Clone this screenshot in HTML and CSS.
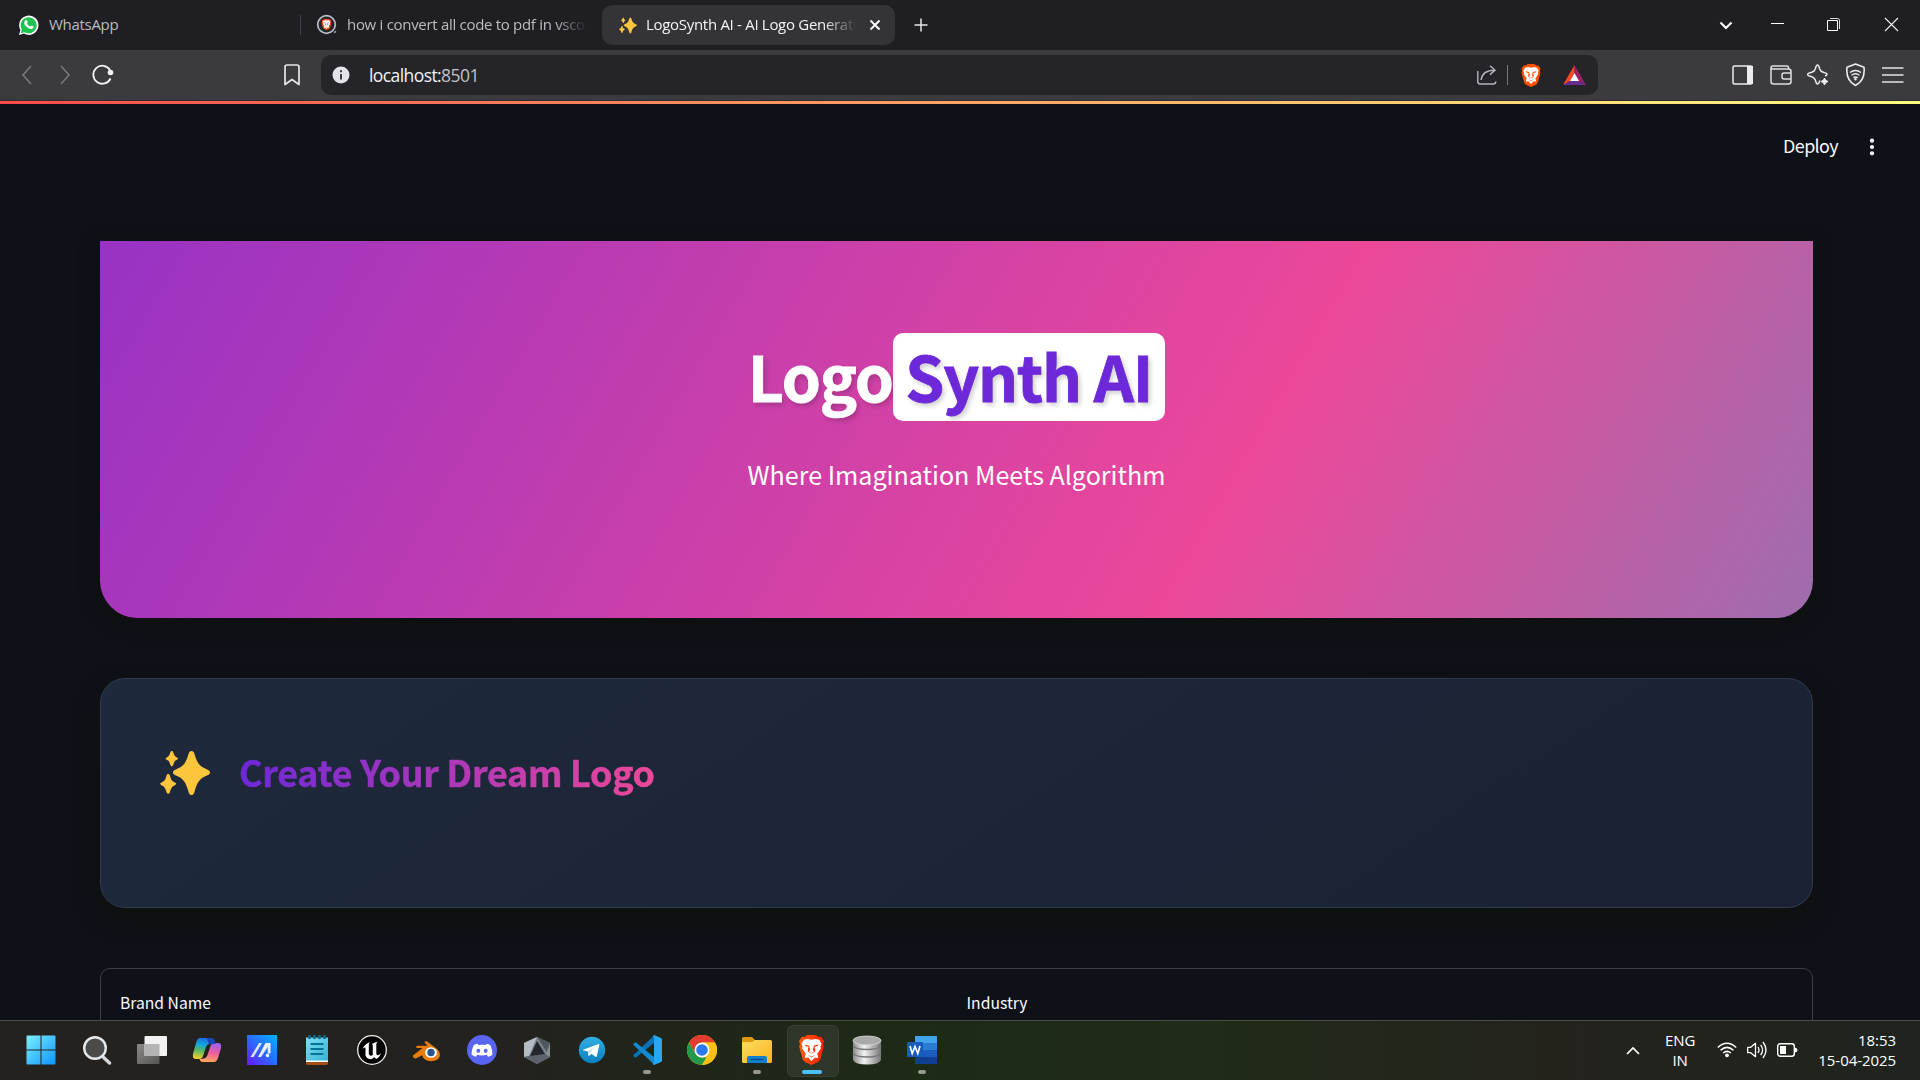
FILE: index.html
```html
<!DOCTYPE html>
<html lang="en">
<head>
<meta charset="utf-8">
<title>LogoSynth AI - AI Logo Generator</title>
<link rel="stylesheet" href="styles.css">
</head>
<body>
<svg class="defs" width="0" height="0">
  <defs>
    <linearGradient id="gWin" x1="0" y1="0" x2="1" y2="1"><stop offset="0" stop-color="#7df0ff"/><stop offset="1" stop-color="#0a93ff"/></linearGradient>
    <linearGradient id="gCopA" x1="0.5" y1="0" x2="0.3" y2="1"><stop offset="0" stop-color="#1a6be0"/><stop offset=".35" stop-color="#16a7d8"/><stop offset=".6" stop-color="#58b862"/><stop offset="1" stop-color="#f3d02b"/></linearGradient>
    <linearGradient id="gCopB" x1="0.6" y1="0" x2="0.4" y2="1"><stop offset="0" stop-color="#a05ef0"/><stop offset=".5" stop-color="#ee5f9c"/><stop offset="1" stop-color="#ffa75c"/></linearGradient>
    <linearGradient id="gMy" x1="0" y1="1" x2="1" y2="0"><stop offset="0" stop-color="#6a14ff"/><stop offset=".5" stop-color="#2a6cff"/><stop offset="1" stop-color="#00b4ff"/></linearGradient>
    <linearGradient id="gNote" x1="0" y1="0" x2="1" y2="1"><stop offset="0" stop-color="#7fe0f2"/><stop offset="1" stop-color="#35b3d4"/></linearGradient>
    <linearGradient id="gTg" x1="0" y1="0" x2="0" y2="1"><stop offset="0" stop-color="#31aee4"/><stop offset="1" stop-color="#0a80be"/></linearGradient>
    <linearGradient id="gFold" x1="0" y1="0" x2="1" y2="1"><stop offset="0" stop-color="#ffdc62"/><stop offset="1" stop-color="#f6b51e"/></linearGradient>
    <linearGradient id="gDb" x1="0" y1="0" x2="1" y2="0"><stop offset="0" stop-color="#8c8c8c"/><stop offset=".4" stop-color="#f2f2f2"/><stop offset="1" stop-color="#777"/></linearGradient>
    <linearGradient id="gBrave" x1="0" y1="0" x2="1" y2="0"><stop offset="0" stop-color="#ff5a10"/><stop offset="1" stop-color="#ff2000"/></linearGradient>
    <linearGradient id="gTask" x1="0" y1="0" x2="1" y2="1"><stop offset="0" stop-color="#8a8a88"/><stop offset="1" stop-color="#555553"/></linearGradient>
    <symbol id="sparkles" viewBox="0 0 50 46">
      <path fill="#fbc53c" d="M31.500 1c1.600 0 2.300 1.200 2.800 2.600 2.900 9.500 4.700 12.400 12.700 15.800 1.900.8 3 1.700 3 3s-1.100 2.200-3 3c-8 3.300-9.800 6.800-12.700 17-.5 1.500-1.200 2.600-2.800 2.600s-2.300-1.100-2.800-2.600c-2.900-10.200-4.700-13.700-12.700-17-1.900-.8-3-1.700-3-3s1.100-2.200 3-3c8-3.400 9.800-6.300 12.700-15.800C29.200 2.200 29.900 1 31.500 1z"/>
      <path fill="#fbc53c" d="M11.800 1c.9 0 1.200.6 1.500 1.500.9 3 1.300 3.700 3.500 4.900.9.500 1.200.7 1.200 1.200s-.3.800-1.200 1.200c-2.200 1.100-2.600 2-3.500 5-.3.900-.6 1.500-1.500 1.500s-1.200-.6-1.500-1.500c-.9-3-1.300-3.900-3.500-5-.9-.4-1.200-.7-1.200-1.200s.3-.7 1.200-1.200c2.200-1.200 2.600-1.900 3.500-4.900.3-.9.600-1.500 1.500-1.500zM8.200 24c1 0 1.400.7 1.700 1.700 1.200 4 1.700 5 4.600 6.500 1.100.6 1.700.9 1.700 1.600s-.6 1-1.700 1.600c-2.900 1.500-3.400 2.700-4.600 6.700-.3 1-.7 1.700-1.700 1.700s-1.400-.7-1.700-1.700c-1.200-4-1.700-5.200-4.600-6.700C.800 34.800.2 34.500.2 33.800s.6-1 1.700-1.600c2.900-1.500 3.400-2.500 4.600-6.500.3-1 .7-1.700 1.700-1.700z"/>
    </symbol>
    <symbol id="lion" viewBox="0 0 26 30">
      <path d="M6 2 8.500 0h9L20 2l2.500-.2L25.500 6l-1 3 .8 2.500-3.500 13-2.300 2.500L13 30l-6.500-3L4.200 24.500.700 11.500 1.500 9l-1-3 3-4.200z"/>
      <path fill="#fff" d="m9 4 4 .8L17 4l3.800.8 2.200 4-1 2.700.3 2-3.600 5.500 1 2.500-.8 1.800-2.400-.8-3.500 3.600-3.500-3.600-2.400.8-.8-1.800 1-2.500L3.700 13.500l.3-2-1-2.700 2.200-4z"/>
      <path d="m6 9.500 4.500 1 1.200 4-1.200 2.200 2.500 1.200 2.500-1.200-1.200-2.200 1.200-4 4.500-1-1 1.500-3 .8 .8 3.500-.6 1.700-3.200 1.500-3.200-1.500-.6-1.700.8-3.500-3-.8zM9.500 20l3.500 1.500 3.500-1.500-3.500 2.600z"/>
    </symbol>
  </defs>
</svg>

<div class="screen">
  <header class="tabstrip">
    <div class="tab tab-first">
      <svg width="22" height="22" viewBox="0 0 22 22"><path d="M1 21l1.400-5A9.700 9.700 0 1 1 6 19.600z" fill="#fff"/><path d="M2.800 19.200l1-3.700A8 8 0 1 1 6.500 18.200z" fill="#1fc24f"/><path d="M7.700 6.300c.5-.4 1-.3 1.300.3l.6 1.500c.2.500-.7 1.100-.6 1.400.8 1.500 1.700 2.300 3.200 2.900.4.100 1-1.100 1.400-1l1.700.9c.5.300.4 1.700-.5 2.300-1.300.9-3.200.5-5.300-1-2.600-1.900-4-4.300-3-6.200.300-.5.800-.8 1.200-1.100z" fill="#fff"/></svg>
      <span class="tab-title">WhatsApp</span>
    </div>
    <div class="tab tab-second">
      <svg width="22" height="22" viewBox="0 0 22 22"><circle cx="10.500" cy="10.500" r="8.800" fill="#26262a" stroke="#b9bbc6" stroke-width="1.700"/><path d="M18.500 17.500l1 1" stroke="#b9bbc6" stroke-width="2"/><svg x="5.500" y="4.500" width="10" height="12" viewBox="0 0 26 30"><use href="#lion" fill="#ff4a1c" width="26" height="30"/></svg></svg>
      <span class="tab-title faded">how i convert all code to pdf in vscode</span>
    </div>
    <div class="tab tab-active">
      <svg width="18" height="17" viewBox="0 0 50 46"><use href="#sparkles" width="50" height="46"/></svg>
      <span class="tab-title faded">LogoSynth AI - AI Logo Generator</span>
      <svg class="tab-close" width="12" height="12" viewBox="0 0 12 12"><path d="M1.500 1.500l9 9M10.500 1.500l-9 9" stroke="#fff" stroke-width="1.900"/></svg>
    </div>
    <svg class="new-tab" width="14" height="14" viewBox="0 0 14 14"><path d="M7 .5v13M.5 7h13" stroke="#e6e6ea" stroke-width="1.500"/></svg>
    <div class="window-controls">
      <svg width="57" height="50" viewBox="0 0 57 50"><path d="M28.500 22.500l5.500 5.500 5.500-5.500" fill="none" stroke="#fff" stroke-width="2.200"/></svg>
      <svg width="57" height="50" viewBox="0 0 57 50"><path d="M22 23.500h13" stroke="#fff" stroke-width="1"/></svg>
      <svg width="57" height="50" viewBox="0 0 57 50"><path d="M21.500 20.500h10v10h-10z" fill="none" stroke="#fff"/><path d="M24 18.500h7.500q2 0 2 2V29" fill="none" stroke="#ddd"/></svg>
      <svg width="57" height="50" viewBox="0 0 57 50"><path d="M22 18l13 13M35 18l-13 13" stroke="#eee" stroke-width="1.100"/></svg>
    </div>
  </header>

  <nav class="toolbar">
    <div class="nav-buttons">
      <svg width="12" height="20" viewBox="0 0 12 20"><path d="M10 1L2 10l8 9" fill="none" stroke="#78787d" stroke-width="1.600"/></svg>
      <svg width="12" height="20" viewBox="0 0 12 20"><path d="M2 1l8 9-8 9" fill="none" stroke="#78787d" stroke-width="1.600"/></svg>
      <svg width="22" height="22" viewBox="0 0 22 22"><path d="M18.500 14.500A9 9 0 1 1 18 6" fill="none" stroke="#f2f2f4" stroke-width="1.800"/><circle cx="18.500" cy="8.500" r="2.800" fill="#f2f2f4"/></svg>
    </div>
    <svg class="bookmark" width="16" height="22" viewBox="0 0 16 22"><path d="M1 3q0-2 2-2h10q2 0 2 2v17.500l-7-5-7 5z" fill="none" stroke="#e6e6ea" stroke-width="1.700" stroke-linejoin="round"/></svg>
    <div class="address">
      <svg width="18" height="18" viewBox="0 0 18 18"><circle cx="9" cy="9" r="8.500" fill="#e4e3ea"/><path d="M9 8v5.500M9 4.300v1.900" stroke="#333338" stroke-width="1.900" fill="none"/></svg>
      <span class="url">localhost:<span class="port">8501</span></span>
      <svg class="share" width="20" height="20" viewBox="0 0 20 20"><path d="M.8 6v10.500q0 2.500 2.500 2.500h13q2.500 0 2.500-2.500M4 15C5 8 9 5.200 17.500 5.200M13 .8l5 4.400-5 4.400" fill="none" stroke="#b4b4ba" stroke-width="1.400"/></svg>
      <span class="address-sep"></span>
      <svg class="shield" width="20" height="23" viewBox="0 0 26 30"><use href="#lion" fill="#ff5000" width="26" height="30"/></svg>
      <svg class="bat" width="23" height="20" viewBox="0 0 23 20"><path d="M11.500 0L0 20l7-4 4.500-8z" fill="#ff4724"/><path d="M11.500 0L23 20l-7-4-4.500-8z" fill="#9e1f63"/><path d="M0 20h23l-7-4H7z" fill="#662d91"/><path d="M11.500 8L7 16h9z" fill="#fff"/></svg>
    </div>
    <div class="tools">
      <svg width="22" height="22" viewBox="0 0 22 22"><rect x="1" y="2" width="19" height="18" rx="1.500" fill="none" stroke="#ececf0" stroke-width="1.500"/><path d="M15 2h6v18h-6z" fill="#ececf0"/></svg>
      <svg width="22" height="22" viewBox="0 0 22 22"><path d="M18.500 5V3.500q0-1.500-1.500-1.500H3Q1 2 1 4v13.500Q1 20 3.500 20h15q2.500 0 2.500-2.500V7.500Q21 5 18.500 5H3Q1 5 1 3.500M21 9h-7q-2 0-2 2v2q0 2 2 2h7" fill="none" stroke="#e0e0e4" stroke-width="1.500"/></svg>
      <svg width="22" height="22" viewBox="0 0 22 22"><path d="M13 16.500q-1.300 3.500-2.500 3.500t-2.200-4Q7.500 13.500 4.700 12.700.5 11.600.5 10.500T4.700 8.300Q7.500 7.500 8.300 5 9.200 1 10.500 1t2.200 4Q13.500 7.500 16.300 8.300 20 9.400 20 10.500q0 .8-2 1.500" fill="none" stroke="#ececf0" stroke-width="1.500" stroke-linejoin="round"/><path d="M17.500 14q.6 2.900 3.500 3.500-2.900.6-3.500 3.500-.6-2.900-3.500-3.500 2.900-.6 3.500-3.500z" fill="#ececf0" stroke="#ececf0"/></svg>
      <svg width="22" height="24" viewBox="0 0 22 24"><path d="M10.500 1L19 4.300q1.500 13-8.500 18.200Q.5 17.300 2 4.300z" fill="none" stroke="#ececf0" stroke-width="1.600" stroke-linejoin="round"/><path d="M5 9.500q5.500-4 11 0M6.500 12.200q4-3 8 0M8.300 14.700q2.200-1.500 4.400 0" fill="none" stroke="#ececf0" stroke-width="1.400"/><circle cx="10.500" cy="16.300" r="1.200" fill="#ececf0"/></svg>
      <svg width="22" height="22" viewBox="0 0 22 22"><path d="M0 4h21.500M0 11h21.500M0 18h21.500" stroke="#e4e4e8" stroke-width="1.700"/></svg>
    </div>
  </nav>

  <main class="app">
    <div class="app-stripe"></div>
    <div class="app-bar">
      <span class="deploy">Deploy</span>
      <svg width="6" height="18" viewBox="0 0 6 18"><circle cx="3" cy="2.700" r="2.100" fill="#fafafa"/><circle cx="3" cy="9" r="2.100" fill="#fafafa"/><circle cx="3" cy="15.300" r="2.100" fill="#fafafa"/></svg>
    </div>
    <section class="hero">
      <h1 class="hero-title"><span class="hero-word">Logo</span><span class="hero-badge">Synth AI</span></h1>
      <p class="hero-tagline">Where Imagination Meets Algorithm</p>
    </section>
    <section class="card">
      <svg width="50" height="46" viewBox="0 0 50 46"><use href="#sparkles" width="50" height="46"/></svg>
      <h2 class="card-title">Create Your Dream Logo</h2>
    </section>
    <form class="brief">
      <label class="brief-label">Brand Name</label>
      <label class="brief-label">Industry</label>
    </form>
  </main>

  <footer class="taskbar">
    <div class="apps">
      <div class="app-slot"><svg width="30" height="30" viewBox="0 0 30 30"><path d="M1.500.5H14.500V14.500H.5V1.500q0-1 1-1zM15.500.5h13q1 0 1 1v13h-14zM.5 15.500h14v14h-13q-1 0-1-1zM15.500 15.500h14v13q0 1-1 1h-13z" fill="url(#gWin)"/></svg></div>
      <div class="app-slot"><svg width="30" height="30" viewBox="0 0 30 30"><path d="M19.500 20.500l8 7.500" stroke="#d5d9dc" stroke-width="3.400" stroke-linecap="round"/><circle cx="13" cy="13" r="10.800" fill="#4b4b4a" stroke="#e6e9eb" stroke-width="2.400"/></svg></div>
      <div class="app-slot"><svg width="30" height="30" viewBox="0 0 30 30"><rect x="0" y="9" width="22.500" height="20" rx="1" fill="url(#gTask)"/><rect x="7.500" y="1" width="22.500" height="20" rx="1" fill="#f2f2f2"/><path d="M7.500 9h15v12h-15z" fill="#b4b4b4"/></svg></div>
      <div class="app-slot"><svg width="30" height="30" viewBox="0 0 30 30"><path d="M8 3h11q3 0 4 4l1 2h-6q-3 0-4 3l-3 9q-1 3-4 3H4q-4 0-3-5l3-11Q5.300 3 8 3z" fill="url(#gCopA)"/><path d="M22 27H11q-3 0-3.500-3l5-.5q2-.5 3-3.500l3-9q1-3 4-3h3.500q4 0 3 5l-3 10q-1.300 4-4 4z" fill="url(#gCopB)"/><path d="M15 3h4q3 0 4 4l.8 2h-7z" fill="#1746b4"/></svg></div>
      <div class="app-slot"><svg width="30" height="30" viewBox="0 0 30 30"><path d="M0 0h30v30H0z" fill="url(#gMy)"/><path d="M3.500 22L12 8h3L6.500 22z" fill="#dce6ff"/><path d="M11 22l7.500-14h5v10.500h-2.800V12L14 22z" fill="#e8efff"/><circle cx="20.500" cy="20.500" r="1.700" fill="#fff"/></svg></div>
      <div class="app-slot"><svg width="30" height="30" viewBox="0 0 30 30"><path d="M4 26h22v2.500q0 1.500-2 1.500H6q-2 0-2-1.500z" fill="#a34d12"/><path d="M4 24h22v3H4z" fill="#fff"/><path d="M4 2.500h22V25.500H4z" fill="url(#gNote)"/><path d="M8.500 9h13M8.500 14h13M8.500 19h13" stroke="#067296" stroke-width="1.900"/><path d="M7.500 0v4M12.500 0v4M17.500 0v4M22.500 0v4" stroke="#086c8c" stroke-width="2.600"/></svg></div>
      <div class="app-slot"><svg width="30" height="30" viewBox="0 0 30 30"><circle cx="15" cy="15" r="14.300" fill="#000" stroke="#eee" stroke-width="1.300"/><path d="M5.500 14q2-5 7.500-7-1.200 1-1.200 2.800V19q.5 1.800 2 1.800 1.300 0 2-1V10.500q0-1.500-1-1.500 2.500-1.500 6-2.500-1.500 1.200-1.500 2.500v10q.7 1.500 1.800 1.300 1.400-.4 2.900-2.300-1.500 4.500-4.700 6l-2-1.800-2.700 2Q9.500 24 8.500 20.500V12.500Q7 12 5.500 14z" fill="#fff"/></svg></div>
      <div class="app-slot"><svg width="30" height="30" viewBox="0 0 30 30"><path d="M1 20.500L10.500 13H4.500q-1-1.500.5-2.200h10.500l-3-3.300q.5-1.800 2.300-1.200L25 14q3.500 3.500 2.800 7-1.200 5-8.800 5.300-7.500-.3-8.800-6l-6.500 3.200q-3 0-2.700-3z" fill="#e87d0d"/><ellipse cx="19" cy="17.500" rx="6" ry="5.300" fill="#fff"/><circle cx="19" cy="17.500" r="3.700" fill="#265787"/></svg></div>
      <div class="app-slot"><svg width="30" height="30" viewBox="0 0 30 30"><circle cx="15" cy="15" r="15" fill="#5865f2"/><path d="M10.500 8.800q-2.500.3-4 1.700-2 4.500-2 9 2 1.800 4.500 2.200l1.200-1.900q4.800 1.500 9.600 0l1.200 1.900q2.500-.4 4.500-2.200 0-4.500-2-9-1.500-1.400-4-1.700l-.8 1.300q-3.700-.7-7.400 0z" fill="#fff"/><ellipse cx="11.300" cy="15.800" rx="1.900" ry="2.100" fill="#5865f2"/><ellipse cx="18.700" cy="15.800" rx="1.900" ry="2.100" fill="#5865f2"/></svg></div>
      <div class="app-slot"><svg width="30" height="30" viewBox="0 0 30 30"><path d="M15 2l13 6v14l-13 7-13-7V8z" fill="#7a828b"/><path d="M15 2L2 8v14l5-1z" fill="#b4bcc4"/><path d="M15 2l13 6v14z" fill="#50575e"/><path d="M28 8v14l-4-3z" fill="#868e96"/><path d="M2 22l13 7 13-7-5-3L7 21z" fill="#5c636a"/><path d="M15 6l8 13-15 2z" fill="#24272b"/></svg></div>
      <div class="app-slot"><svg width="30" height="30" viewBox="0 0 30 30"><circle cx="15" cy="15" r="13.200" fill="url(#gTg)"/><path d="M6 14.800L21.500 9q1-.2.800 1l-2.500 11.300q-.3 1-1.300.5l-4.200-3-2 2q-.9.500-1-.7l-.4-3.600-4.700-1.200q-.8-.2-.2-.5z" fill="#fff"/><path d="M11 16.500l7.500-4.700-6 5.600-.8 3z" fill="#b8dcf0"/></svg></div>
      <div class="app-slot running"><svg width="30" height="30" viewBox="0 0 30 30"><path d="M1 20.500L22 .5V8L4 22.500q-1.500.5-3-2z" fill="#0072b9"/><path d="M1 9.500q1.500-2.500 3-2L22 22v7.500z" fill="#1689d3"/><path d="M22 0l7 3q1 .5 1 1.500v21q0 1-1 1.500l-7 3-1.500-1.500q1.500 0 1.500-1.500V3q0-1.500-1.500-1.500z" fill="#29a6f2"/></svg></div>
      <div class="app-slot"><svg width="30" height="30" viewBox="0 0 30 30"><circle cx="15" cy="15" r="15" fill="#fbc116"/><path d="M2 7.500A15 15 0 0 1 28 7.500H15L8.500 18.700z" fill="#e33b2e"/><path d="M2 7.500l6.500 11.300Q11 22.500 15 22.500h6L14.500 30A15 15 0 0 1 2 7.500z" fill="#23994b"/><path d="M28 7.500H15l6.500 11.300L15 30a15 15 0 0 0 13-22.500z" fill="#fbc116"/><circle cx="15" cy="15" r="7.500" fill="#fff"/><circle cx="15" cy="15" r="5.800" fill="#2b79ee"/></svg></div>
      <div class="app-slot running"><svg width="30" height="30" viewBox="0 0 30 30"><path d="M0 4q0-2 1.500-2H10l3 3h-1v5H0z" fill="#dc9a0c"/><path d="M0 7h10.500l2-2H28.500q1.500 0 1.500 1.500v20q0 1.500-1.500 1.500h-27Q0 28 0 26.500z" fill="url(#gFold)"/><path d="M5 28v-5q0-2 2-2h16q2 0 2 2v5z" fill="#1180d2"/><path d="M8.500 24.500h13" stroke="#074d92" stroke-width="1.500"/></svg></div>
      <div class="app-slot current"><svg width="27" height="30" viewBox="0 0 26 30"><use href="#lion" fill="url(#gBrave)" width="26" height="30"/></svg></div>
      <div class="app-slot"><svg width="30" height="30" viewBox="0 0 30 30"><path d="M1 5v20q2 4.500 14 4.500T29 25V5z" fill="url(#gDb)"/><path d="M1 10.500q2 4 14 4t14-4M1 18q2 4 14 4t14-4" fill="none" stroke="#777" stroke-width="1.500"/><ellipse cx="15" cy="5.500" rx="14" ry="4.500" fill="#aaa" stroke="#ddd" stroke-width=".8"/></svg></div>
      <div class="app-slot running"><svg width="30" height="30" viewBox="0 0 30 30"><path d="M8 1h22v28H8z" fill="#1b5cbe"/><path d="M8 1h21q1 0 1 1v6H8z" fill="#41a5ee"/><path d="M8 8h22v7H8z" fill="#2b7cd3"/><path d="M8 22h22v6q0 1-1 1H8z" fill="#103f91"/><rect x="0" y="7" width="16" height="15" rx="1" fill="#185abd"/><path d="M3 11l2.200 7.500L8 11.500l2.800 7L13 11" fill="none" stroke="#fff" stroke-width="1.700"/></svg></div>
    </div>
    <div class="tray">
      <svg width="14" height="9" viewBox="0 0 14 9"><path d="M1 8l6-6 6 6" fill="none" stroke="#fff" stroke-width="1.700"/></svg>
      <div class="lang"><span>ENG</span><span>IN</span></div>
      <div class="status">
        <svg width="20" height="16" viewBox="0 0 20 16"><path d="M.8 5.500q9.200-8.500 18.400 0M3.500 8.300q6.500-5.800 13 0M6.200 11q3.800-3.200 7.600 0" fill="none" stroke="#fff" stroke-width="1.500"/><circle cx="10" cy="13.300" r="1.900" fill="#fff"/></svg>
        <svg width="20" height="18" viewBox="0 0 20 18"><path d="M.7 6.300h3l4.800-4v13.400l-4.800-4h-3z" fill="none" stroke="#fff" stroke-width="1.300" stroke-linejoin="round"/><path d="M11 6q2 3 0 6M13.700 3.800q3.800 5.200 0 10.400M16 1q6 8 0 16" fill="none" stroke="#fff" stroke-width="1.300"/></svg>
        <svg width="21" height="14" viewBox="0 0 21 14"><rect x=".7" y=".7" width="16.600" height="12.600" rx="2.500" fill="none" stroke="#fff" stroke-width="1.400"/><path d="M3 3h6v8H3z" fill="#fff"/><path d="M18 4.500q2.500.5 2.500 2.500t-2.500 2.500z" fill="#fff"/></svg>
      </div>
      <div class="clock"><span>18:53</span><span>15-04-2025</span></div>
    </div>
  </footer>
</div>
</body>
</html>
```
FILE: styles.css
```css
* { box-sizing: border-box; }

body {
  margin: 0;
  background: #0e1117;
  font-family: "Open Sans", "Noto Sans", sans-serif;
  color: #fafafa;
}

svg { display: block; flex: none; }
.defs { position: absolute; }

.screen {
  width: 1920px;
  height: 1080px;
  overflow: hidden;
  display: flex;
  flex-direction: column;
}

/* Tab strip */
.tabstrip {
  height: 50px;
  flex: none;
  display: flex;
  align-items: center;
  background: #1f1e23;
}
.tab {
  height: 40px;
  display: flex;
  align-items: center;
  gap: 9px;
  font-size: 15px;
  font-stretch: 92%;
  color: #bcbcc0;
  white-space: nowrap;
}
.tab-title { letter-spacing: -0.3px; line-height: 20px; padding-bottom: 2px; }
.tab-first { width: 300px; padding-left: 18px; }
.tab-second {
  width: 302px;
  padding: 0 15px 0 16px;
  position: relative;
}
.tab-second::before {
  content: "";
  position: absolute;
  left: 0;
  top: 10px;
  width: 1px;
  height: 20px;
  background: #404046;
}
.tab-active {
  width: 293px;
  padding: 0 14px 0 17px;
  border-radius: 10px;
  background: #343338;
  color: #f4f4f6;
}
.tab-active .tab-title { flex: 1; margin-right: 4px; }
.faded {
  flex: 1;
  overflow: hidden;
  mask-image: linear-gradient(to right, #000 calc(100% - 32px), transparent);
}
.new-tab { margin-left: 19px; }
.window-controls { margin-left: auto; display: flex; }

/* Toolbar */
.toolbar {
  height: 51px;
  flex: none;
  display: flex;
  align-items: center;
  background: #3b3a3f;
  border-bottom: 1px solid #2d2c31;
}
.nav-buttons {
  display: flex;
  align-items: center;
  gap: 26px;
  padding-left: 21px;
}
.nav-buttons svg:last-child { margin-left: -5px; }
.bookmark { margin-left: 170px; }
.address {
  width: 1277px;
  height: 40px;
  margin-left: 21px;
  padding: 0 12px 0 11px;
  display: flex;
  align-items: center;
  border-radius: 10px;
  background: #252429;
}
.url {
  flex: 1;
  margin-left: 19px;
  padding-bottom: 1px;
  font-size: 17.500px;
  font-stretch: 90%;
  letter-spacing: -0.580px;
  color: #f2f2f4;
}
.port { color: #c2c2c8; }
.address-sep {
  width: 1px;
  height: 20px;
  margin: 0 13px 0 10px;
  background: #77777c;
}
.bat { margin-left: 22px; }
.tools {
  margin-left: auto;
  padding-right: 16px;
  display: flex;
  align-items: center;
  gap: 15.500px;
}

/* Application page */
.app {
  flex: 1;
  min-height: 0;
  overflow: hidden;
  font-family: "Noto Sans CJK JP", "Noto Sans", sans-serif;
}
.app-stripe {
  height: 3px;
  background: linear-gradient(90deg, #ff4b4b, #fffd80);
}
.app-bar {
  height: 137px;
  display: flex;
  justify-content: flex-end;
  padding: 32px 45px 0 0;
  gap: 31px;
}
.app-bar svg { margin-top: 2px; }
.deploy { font-size: 17.900px; line-height: 19px; letter-spacing: -0.6px; }

.hero {
  width: 1713px;
  height: 377px;
  margin-left: 100px;
  padding-top: 92px;
  border-radius: 0 0 37.500px 37.500px;
  background: linear-gradient(120deg, #6d28d9 -566px, #ec4899 1106px, #06b6d4 2778px);
  box-shadow: 0 5px 20px rgba(16, 16, 12, 0.8);
  text-align: center;
}
.hero-title {
  margin: 0;
  display: flex;
  justify-content: center;
  height: 88px;
  font-size: 62.700px;
  font-weight: 700;
  line-height: 84px;
  letter-spacing: -1.250px;
  color: #fff;
  text-shadow: 2.500px 2.500px 5px rgba(0, 0, 0, 0.2);
  -webkit-text-stroke: 0.8px currentColor;
}
.hero-badge {
  padding: 0 13px 0 12.500px;
  border-radius: 10px;
  background: #fff;
  color: #6d28d9;
}
.hero-tagline {
  margin: 35px 0 0;
  font-size: 25.100px;
  line-height: 36px;
  color: #fff;
}

.card {
  width: 1713px;
  height: 230px;
  margin: 60px 0 0 100px;
  padding: 71px 0 0 59px;
  display: flex;
  align-items: flex-start;
  gap: 29px;
  border: 1px solid #2f3c50;
  border-radius: 25px;
  background: linear-gradient(145deg, #1e293b, #1a2233);
  box-shadow: 0 10px 25px rgba(16, 16, 12, 0.8);
}
.card-title {
  margin: -2px 0 0;
  padding-bottom: 8px;
  font-size: 35.800px;
  line-height: 46px;
  font-weight: 700;
  letter-spacing: -0.230px;
  color: transparent;
  background: linear-gradient(90deg, #6d28d9, #ec4899);
  -webkit-background-clip: text;
  background-clip: text;
  -webkit-text-stroke: 0.5px transparent;
}

.brief {
  width: 1713px;
  height: 120px;
  margin: 60px 0 0 100px;
  padding: 24px 19px;
  display: grid;
  grid-template-columns: 1fr 1fr;
  column-gap: 20px;
  border: 1px solid #3c3e43;
  border-radius: 10px;
}
.brief-label { font-size: 15.700px; line-height: 20px; }

/* Taskbar */
.taskbar {
  height: 60px;
  flex: none;
  display: flex;
  justify-content: space-between;
  border-top: 1px solid #484a45;
  background: linear-gradient(90deg, #24221f 0, #23221e 520px, #1f2718 740px, #1d2b16 960px, #202b18 1200px, #24231d 1580px, #20241e 1920px);
}
.apps { display: flex; padding-left: 14px; }
.app-slot {
  width: 55px;
  height: 57px;
  display: flex;
  align-items: center;
  justify-content: center;
  position: relative;
}
.app-slot:first-child svg { margin-left: -1px; }
.running::after,
.current::after {
  content: "";
  position: absolute;
  bottom: 4px;
  left: 24px;
  width: 8px;
  height: 4px;
  border-radius: 2px;
  background: #96988f;
}
.current::after { left: 18px; width: 20px; background: #4cc2ff; }
.current::before {
  content: "";
  position: absolute;
  left: 3px;
  top: 4px;
  width: 50px;
  height: 50px;
  border: 1px solid #38402f;
  border-radius: 6px;
  background: #2e3629;
}
.current svg { position: relative; }

.tray {
  height: 58px;
  display: flex;
  align-items: center;
  padding-right: 24px;
  font-size: 15px;
  line-height: 20px;
  letter-spacing: -0.060px;
  color: #fff;
}
.lang {
  display: flex;
  flex-direction: column;
  align-items: center;
  margin-left: 25px;
}
.status {
  display: flex;
  align-items: center;
  gap: 10px;
  margin: 0 20px 0 22px;
}
.clock {
  display: flex;
  flex-direction: column;
  align-items: flex-end;
}
```
